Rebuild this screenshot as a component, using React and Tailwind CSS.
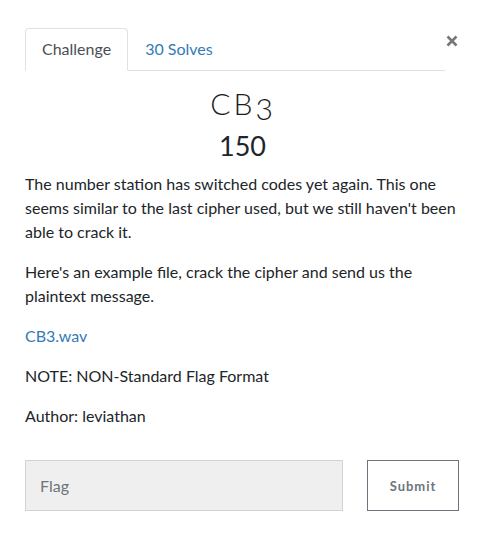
import React from 'react';

const App = () => {
  return (
    <div className="min-h-[536px] bg-white px-[25px] pt-[28px] font-['Lato','Noto_Sans',sans-serif] text-[16px] leading-6 text-[#212529]">
      <div className="flex items-start">
        <nav className="flex w-[420px] border-b border-[#dee2e6]">
          <div className="-mb-px rounded-t border border-[#dee2e6] border-b-white bg-white px-4 py-2 text-[#495057]">
            Challenge
          </div>
          <div className="border border-transparent px-4 py-2 text-[#337ab7]">30 Solves</div>
        </nav>
        <button className="ml-px mt-[7px] text-[#777]">
          <svg width="12" height="12" viewBox="0 0 12 12">
            <path d="M1.5 1.5 L10.5 10.5 M10.5 1.5 L1.5 10.5" stroke="currentColor" strokeWidth="2.6" />
          </svg>
        </button>
      </div>

      <div className="mt-[14px] text-center">
        <h3 className="pl-[1px] text-[30px] font-light leading-[36px] tracking-[3px] text-[#1a1d20]">
          CB<span className="relative top-[5px]">3</span>
        </h3>
        <h4 className="mt-[9px] text-[27px] leading-[32px] text-[#212529]">150</h4>
      </div>

      <div className="mt-[10px] w-[434px] space-y-4">
        <p>
          The number station has switched codes yet again. This one seems similar to the last cipher
          used, but we still haven't been able to crack it.
        </p>
        <p>Here's an example file, crack the cipher and send us the plaintext message.</p>
        <p>
          <a href="#" className="text-[#337ab7]">CB3.wav</a>
        </p>
        <p>NOTE: NON-Standard Flag Format</p>
        <p>Author: leviathan</p>
      </div>

      <div className="mt-8 flex w-[434px] gap-6">
        <input
          type="text"
          placeholder="Flag"
          className="h-[51px] w-[318px] border border-[#ced4da] bg-[#efefef] px-[14px] text-[16px] text-[#495057] placeholder:text-[#6c757d] outline-none"
        />
        <button className="h-[51px] w-[92px] border border-[#6c757d] bg-white text-[13px] font-bold tracking-[1px] text-[#6c757d]">
          Submit
        </button>
      </div>
    </div>
  );
};

export default App;
